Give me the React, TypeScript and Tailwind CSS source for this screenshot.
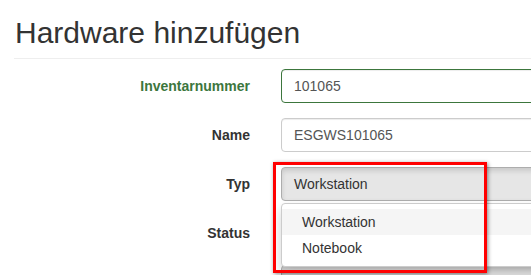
import React from "react";

const labelClass = "w-[250px] shrink-0 text-right text-[14px] font-bold";
const rowClass = "flex items-center h-[34px] mb-[15px]";

function Field({
  label,
  value,
  success,
}: {
  label: string;
  value: string;
  success?: boolean;
}) {
  return (
    <div className={rowClass}>
      <label className={`${labelClass} ${success ? "text-[#3c763d]" : "text-[#333]"}`}>{label}</label>
      <input
        readOnly
        value={value}
        className={`ml-[31px] h-[34px] w-[300px] shrink-0 rounded-[4px] border bg-white px-[12px] text-[14px] text-[#555] shadow-[inset_0_1px_1px_rgba(0,0,0,0.075)] outline-none ${
          success ? "border-[#3c763d]" : "border-[#ccc]"
        }`}
      />
    </div>
  );
}

function SelectButton({ label, value }: { label: string; value: string }) {
  return (
    <div className={rowClass}>
      <label className={`${labelClass} text-[#333]`}>{label}</label>
      <div className="ml-[31px] flex h-[34px] w-[300px] shrink-0 items-center rounded-[4px] border border-[#adadad] bg-[#e6e6e6] px-[12px] text-[14px] text-[#333] shadow-[inset_0_3px_5px_rgba(0,0,0,0.125)]">
        {value}
      </div>
    </div>
  );
}

export default function App() {
  const options = ["Workstation", "Notebook"];

  return (
    <div className="relative h-[275px] w-[531px] overflow-hidden bg-white font-['Liberation_Sans',Arial,sans-serif] text-[#333]">
      <div className="pl-[14px]">
        <h1 className="pl-px pt-[16px] text-[30px] font-normal leading-[33px] text-[#333]">Hardware hinzufügen</h1>
        <hr className="mt-[9px] mb-[10px] border-t border-[#eee]" />
      </div>

      <Field label="Inventarnummer" value="101065" success />
      <Field label="Name" value="ESGWS101065" />
      <SelectButton label="Typ" value="Workstation" />
      <SelectButton label="Status" value="" />
      <SelectButton label="" value="" />

      {/* open dropdown of the Typ select */}
      <div className="absolute left-[281px] top-[203px] w-[300px] rounded-[4px] border border-[#ccc] bg-white py-[5px] shadow-[0_6px_12px_rgba(0,0,0,0.175)]">
        {options.map((option, i) => (
          <div
            key={option}
            className={`h-[26px] pl-[20px] text-[14px] leading-[26px] text-[#333] ${i === 0 ? "bg-[#f5f5f5]" : ""}`}
          >
            {option}
          </div>
        ))}
      </div>

      {/* red highlight frame */}
      <div className="absolute left-[273px] top-[162px] h-[111px] w-[214px] border-[3px] border-[#ff0000] shadow-[1px_1px_4px_rgba(0,0,0,0.45)]" />
    </div>
  );
}
